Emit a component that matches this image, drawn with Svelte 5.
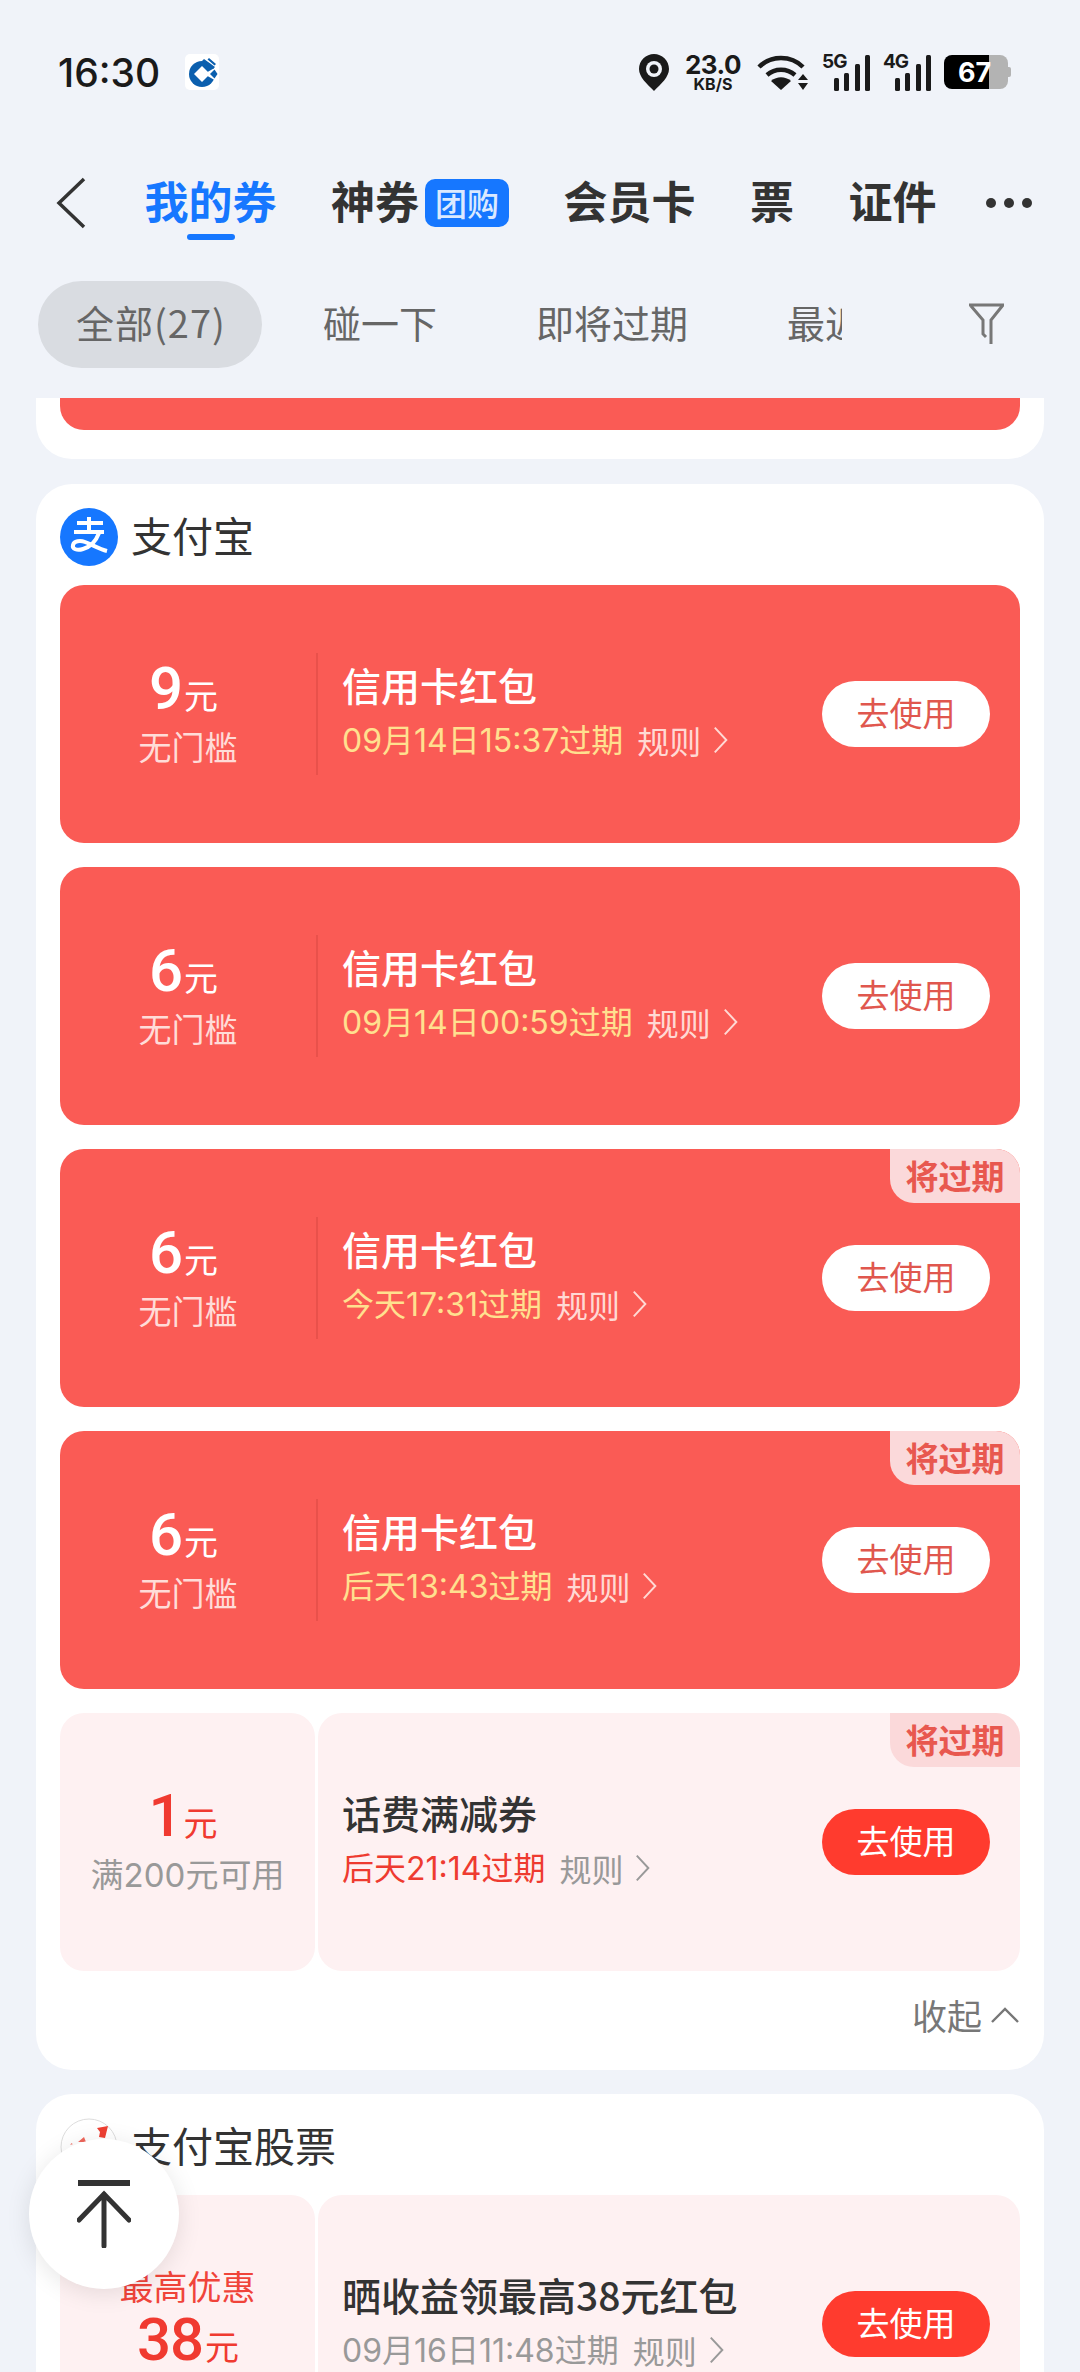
<script>
	const filters = ["碰一下", "即将过期", "最近"];

	const alipay = [
		{ amount: "9", unit: "元", desc: "无门槛", title: "信用卡红包", date: "09月14日15:37过期", red: true },
		{ amount: "6", unit: "元", desc: "无门槛", title: "信用卡红包", date: "09月14日00:59过期", red: true },
		{ amount: "6", unit: "元", desc: "无门槛", title: "信用卡红包", date: "今天17:31过期", red: true, tag: true },
		{ amount: "6", unit: "元", desc: "无门槛", title: "信用卡红包", date: "后天13:43过期", red: true, tag: true },
		{ amount: "1", unit: "元", desc: "满200元可用", title: "话费满减券", date: "后天21:14过期", tag: true, hot: true }
	];

	const stock = { amount: "38", unit: "元", top: "最高优惠", title: "晒收益领最高38元红包", date: "09月16日11:48过期" };

	// digits in the dates use a different face from the CJK around them
	const tokens = (s) => s.match(/[\d:]+|[^\d:]+/g);
</script>

{#snippet chevron()}
	<svg class="chev" viewBox="0 0 18 32" width="18" height="32"><path d="M2 2l13 14L2 30" fill="none" stroke="currentColor" stroke-width="2.2" /></svg>
{/snippet}

{#snippet coupon(c)}
	<div class="coupon" class:red={c.red}>
		<div class="left">
			{#if c.top}<div class="top">{c.top}</div>{/if}
			<div class="amount">{c.amount}<small>{c.unit}</small></div>
			{#if c.desc}<div class="desc">{#each tokens(c.desc) as t}{#if /\d/.test(t)}<span class="num">{t}</span>{:else}{t}{/if}{/each}</div>{/if}
		</div>
		<div class="right">
			<div class="info">
				<div class="title">{c.title}</div>
				<div class="meta">
					<span class="date" class:hot={c.hot || c.red}>{#each tokens(c.date) as t}{#if /\d/.test(t)}<span class="num">{t}</span>{:else}{t}{/if}{/each}</span>
					<span class="rule">规则</span>
					{@render chevron()}
				</div>
			</div>
			<button type="button" class="use">去使用</button>
			{#if c.tag}<span class="tag">将过期</span>{/if}
		</div>
	</div>
{/snippet}

<div class="page">
	<div class="status">
		<div class="status-left">
			<span class="time">16:30</span>
			<svg class="ccb" viewBox="0 0 34 36" width="34" height="36">
				<rect width="34" height="36" rx="5" fill="#fff" />
				<circle cx="17" cy="20" r="13" fill="#0b5fae" />
				<path d="M17 12l8 8-8 8-8-8z" fill="#fff" />
				<path d="M19 20l14-8v16z" fill="#fff" />
				<path d="M25 20l4.500-4.500 3 4.500-3 4.500z" fill="#0b5fae" />
				<path d="M19 5l11 8-2 2-11-8zM24 4l7 6-1.500 1.500-7-6z" fill="#0b5fae" />
			</svg>
		</div>
		<div class="status-right">
			<svg class="pin" viewBox="0 0 30 37" width="30" height="37">
				<path d="M15 0C7 0 0 6.500 0 15c0 8 8 15 15 22 7-7 15-14 15-22C30 6.500 23 0 15 0z" fill="#1a1a1a" />
				<circle cx="15" cy="15" r="8" fill="#f0f3f9" />
				<circle cx="15" cy="15" r="4.500" fill="#1a1a1a" />
			</svg>
			<div class="speed"><b>23.0</b><span>KB/S</span></div>
			<svg class="wifi" viewBox="0 0 52 37" width="52" height="37">
				<path d="M2 13C14 1 34 1 46 13M10 21c8-7 20-7 28 0" fill="none" stroke="#1a1a1a" stroke-width="4.500" />
				<path d="M14 27c6-5 14-5 20 0l-10 9z" fill="#1a1a1a" />
				<path d="M46 20l5 6H41zM46 36l5-7H41z" fill="#1a1a1a" />
			</svg>
			<div class="signal">
				<span class="gen">5G</span>
				<i style="height:13px"></i><i style="height:18px"></i><i style="height:27px"></i><i style="height:36px"></i>
			</div>
			<div class="signal">
				<span class="gen">4G</span>
				<i style="height:13px"></i><i style="height:18px"></i><i style="height:27px"></i><i style="height:36px"></i>
			</div>
			<div class="battery"><span class="level">67</span></div>
		</div>
	</div>

	<nav class="nav">
		<svg class="back" viewBox="0 0 32 52" width="32" height="52"><path d="M29 2L4 26l25 24" fill="none" stroke="#333" stroke-width="3.500" /></svg>
		<span class="tab active">我的券</span>
		<span class="tab">神券<em>团购</em></span>
		<span class="tab">会员卡</span>
		<span class="tab">票</span>
		<span class="tab">证件</span>
		<span class="dots"><i></i><i></i><i></i></span>
	</nav>

	<div class="filters">
		<div class="filter-scroll">
			<span class="chip on">全部(27)</span>
			{#each filters as f}<span class="chip">{f}</span>{/each}
		</div>
		<svg class="funnel" viewBox="0 0 36 42" width="36" height="42">
			<path d="M1 2h34L23 17v24M3 3l12 14v14l3 3" fill="none" stroke="#777" stroke-width="3" />
		</svg>
	</div>

	<div class="list">
		<section class="card stub"><div class="bar"></div></section>

		<section class="card">
			<header class="brand">
				<svg class="ali" viewBox="0 0 58 58" width="58" height="58" role="img" aria-label="支付宝">
					<circle cx="29" cy="29" r="29" fill="#1677ff" />
					<path d="M17 15h26M14 24h30M29 9v15" fill="none" stroke="#fff" stroke-width="4" />
					<path d="M39 25c-3 8-9 14-16 16-6 2-11 0-10-4 1-4 7-5 12-3 8 3 14 7 22 9" fill="none" stroke="#fff" stroke-width="4" />
				</svg>
				<h2>支付宝</h2>
			</header>
			<div class="coupons">
				{#each alipay as c}{@render coupon(c)}{/each}
			</div>
			<div class="fold">
				<span>收起</span>
				<svg viewBox="0 0 30 18" width="30" height="18"><path d="M2 16L15 3l13 13" fill="none" stroke="#777" stroke-width="2.400" /></svg>
			</div>
		</section>

		<section class="card">
			<header class="brand">
				<svg class="stock" viewBox="0 0 58 58" width="58" height="58">
					<circle cx="29" cy="29" r="28" fill="#fff" stroke="#ddd" stroke-width="1" />
					<path d="M10 26.500l2-1.500 .500 1.500zM18 24l6-5 2 5z" fill="#f0675c" />
					<path d="M37 10l11-2-3 12-6-1 1-5z" fill="#ee3f32" />
				</svg>
				<h2>支付宝股票</h2>
			</header>
			<div class="coupons">
				{@render coupon(stock)}
			</div>
		</section>
	</div>

	<button type="button" class="to-top" aria-label="回到顶部">
		<svg viewBox="0 0 54 68" width="54" height="68">
			<path d="M1 3h52" stroke="#333" stroke-width="6" fill="none" />
			<path d="M27 66V14M2 40l25-26 25 26" stroke="#333" stroke-width="5" fill="none" stroke-linecap="round" />
		</svg>
	</button>
</div>

<style>
	:global(body) {
		margin: 0;
		background: #f0f3f9;
	}

	.page {
		position: relative;
		height: 2372px;
		overflow: hidden;
		background: #f0f3f9;
		color: #333;
		font-family: "Noto Sans CJK SC", sans-serif;
	}

	.status {
		height: 144px;
		box-sizing: border-box;
		padding: 0 69px 0 58px;
		display: flex;
		align-items: center;
		justify-content: space-between;
	}

	.status-left {
		display: flex;
		align-items: center;
		gap: 25px;
	}

	.time {
		font: 500 39px Inter, sans-serif;
		color: #1a1a1a;
	}

	.status-right {
		display: flex;
		align-items: center;
		gap: 13px;
		color: #1a1a1a;
	}

	.speed {
		width: 62px;
		display: flex;
		flex-direction: column;
		align-items: center;
		font-family: Inter, sans-serif;
	}

	.speed b {
		font-size: 26px;
		font-weight: 700;
		line-height: 24px;
		letter-spacing: -0.5px;
	}

	.speed span {
		font-size: 16px;
		font-weight: 700;
		line-height: 14px;
	}

	.signal {
		position: relative;
		width: 48px;
		height: 37px;
		display: flex;
		align-items: flex-end;
		justify-content: flex-end;
		gap: 5.500px;
	}

	.signal i {
		width: 5px;
		border-radius: 1.500px;
		background: #1a1a1a;
	}

	.gen {
		position: absolute;
		left: 0;
		top: -2px;
		font: 700 19px/20px Inter, sans-serif;
		letter-spacing: -1px;
	}

	.battery {
		position: relative;
		width: 64px;
		height: 34px;
		border-radius: 8px;
		background: linear-gradient(90deg, #000 45px, #b3b3b3 45px);
		color: #fff;
		display: flex;
		align-items: center;
		margin-right: 3px;
	}

	.battery::after {
		content: "";
		position: absolute;
		right: -3px;
		top: 12px;
		width: 3px;
		height: 10px;
		border-radius: 0 2px 2px 0;
		background: #b3b3b3;
	}

	.level {
		font: 700 27px Inter, sans-serif;
		margin-left: 14px;
	}

	.nav {
		height: 118px;
		box-sizing: border-box;
		padding-left: 55px;
		display: flex;
		align-items: center;
		gap: 54.500px;
	}

	.back {
		margin-right: 3px;
	}

	.tab {
		position: relative;
		display: flex;
		align-items: center;
		padding-bottom: 6px;
		font-size: 44px;
		line-height: 60px;
		font-weight: 700;
		color: #333;
	}

	.tab em {
		margin: 6px 0 0 6px;
		width: 84px;
		height: 48px;
		border-radius: 10px;
		background: #1677ff;
		color: #dbe9ff;
		font-style: normal;
		font-size: 32px;
		font-weight: 500;
		line-height: 46px;
		text-align: center;
	}

	.tab.active {
		color: #1677ff;
	}

	.tab.active::after {
		content: "";
		position: absolute;
		left: 42px;
		bottom: -4px;
		width: 48px;
		height: 6px;
		border-radius: 3px;
		background: #1677ff;
	}

	.dots {
		display: flex;
		gap: 8px;
		margin-left: -5px;
	}

	.dots i {
		width: 10px;
		height: 10px;
		border-radius: 50%;
		background: #333;
	}

	.filters {
		padding: 19px 0 30px 38px;
		display: flex;
		align-items: center;
	}

	.filter-scroll {
		width: 804px;
		overflow: hidden;
		display: flex;
		gap: 23px;
		white-space: nowrap;
	}

	.chip {
		flex: none;
		height: 87px;
		padding: 0 38px;
		border-radius: 44px;
		font-size: 38px;
		line-height: 82px;
		color: #666;
	}

	.chip.on {
		padding-right: 36px;
		background: #d9dce1;
		letter-spacing: 1px;
	}

	.funnel {
		margin-left: 126px;
		margin-top: -2px;
	}

	.list {
		display: flex;
		flex-direction: column;
		gap: 24px;
		padding: 0 36px;
	}

	.card {
		background: #fff;
		border-radius: 36px;
		padding: 0 24px;
	}

	.stub {
		border-radius: 0 0 36px 36px;
		padding-bottom: 29px;
		margin-bottom: 1px;
	}

	.bar {
		height: 32px;
		border-radius: 0 0 24px 24px;
		background: #fa5b55;
	}

	.brand {
		display: flex;
		align-items: center;
		gap: 13px;
		padding: 24px 0 19px;
	}

	.brand h2 {
		margin: 0;
		padding-bottom: 5px;
		font-size: 41px;
		line-height: 53px;
		font-weight: 400;
		color: #333;
	}

	.coupons {
		display: flex;
		flex-direction: column;
		gap: 24px;
	}

	.coupon {
		display: flex;
		height: 258px;
		gap: 3px;
	}

	.left {
		width: 255px;
		flex: none;
		background: #fef1f2;
		border-radius: 24px;
		display: flex;
		flex-direction: column;
		align-items: center;
		justify-content: center;
		color: #f03a30;
	}

	.amount {
		font-family: Roboto, sans-serif;
		font-size: 60px;
		line-height: 62px;
		font-weight: 500;
		letter-spacing: -1px;
		padding-right: 10px;
		margin-top: 2px;
	}

	.amount small {
		font-family: "Noto Sans CJK SC", sans-serif;
		font-size: 34px;
		font-weight: 400;
		margin-left: 2px;
	}

	.desc {
		font-size: 33px;
		line-height: 40px;
		padding-bottom: 6px;
		color: #999;
	}

	.top {
		font-size: 34px;
		line-height: 46px;
		color: #f0443a;
	}

	.top + .amount {
		margin: 0 0 8px;
		padding-right: 0;
	}

	.right {
		position: relative;
		flex: 1;
		background: #fef1f2;
		border-radius: 24px;
		overflow: hidden;
		display: flex;
		align-items: center;
		justify-content: space-between;
		padding: 0 30px 0 24px;
	}

	/* dashed seam between the two halves */
	.right::before {
		content: "";
		position: absolute;
		left: -2px;
		top: 50px;
		bottom: 36px;
		border-left: 2px dashed #f7d5d6;
	}

	.info {
		padding-bottom: 6px;
	}

	.title {
		font-size: 39px;
		line-height: 54px;
		font-weight: 500;
		color: #333;
	}

	.meta {
		display: flex;
		align-items: center;
		gap: 12px;
		margin-top: 3px;
		font-size: 32px;
		line-height: 48px;
		color: #999;
	}

	.date {
		color: #999;
		margin-right: 2px;
	}

	.date.hot {
		color: #ee3b30;
	}

	.num {
		font-family: Inter, sans-serif;
	}

	.chev {
		width: 16px;
		height: 30px;
	}

	.use {
		flex: none;
		width: 168px;
		height: 66px;
		padding: 0 0 4px;
		border: none;
		border-radius: 33px;
		background: #ff3b2e;
		color: #fff;
		font-family: inherit;
		font-size: 33px;
	}

	.tag {
		position: absolute;
		right: 0;
		top: 0;
		width: 130px;
		height: 54px;
		border-radius: 0 0 0 24px;
		background: #fbd9da;
		color: #e8584f;
		font-size: 33px;
		font-weight: 700;
		line-height: 52px;
		text-align: center;
	}

	.coupon.red .left,
	.coupon.red .right {
		background: #fa5b55;
	}

	.coupon.red {
		gap: 0;
		border-radius: 24px;
		overflow: hidden;
	}

	.coupon.red .left {
		border-radius: 0;
		width: 256px;
		color: #fff;
	}

	.coupon.red .desc {
		color: #ffdcd8;
	}

	.coupon.red .right {
		border-radius: 0;
		overflow: visible;
		padding-left: 26px;
	}

	.coupon.red .right::before {
		left: 0;
		top: 68px;
		bottom: 68px;
		border-left: 2px solid #e9514b;
	}

	.coupon.red .title {
		color: #fff;
	}

	.coupon.red .date {
		color: #ffe08f;
	}

	.coupon.red .meta {
		color: #ffd9d4;
	}

	.coupon.red .use {
		background: #fff;
		color: #e0574e;
	}

	.fold {
		height: 99px;
		box-sizing: border-box;
		padding-bottom: 12px;
		display: flex;
		align-items: center;
		justify-content: flex-end;
		gap: 8px;
		font-size: 35px;
		color: #777;
	}

	.to-top {
		position: absolute;
		left: 29px;
		top: 2139px;
		width: 150px;
		height: 150px;
		padding: 0;
		border: none;
		border-radius: 50%;
		background: #fff;
		box-shadow: 0 4px 24px rgba(0, 0, 0, 0.1);
		display: flex;
		align-items: center;
		justify-content: center;
	}
</style>
